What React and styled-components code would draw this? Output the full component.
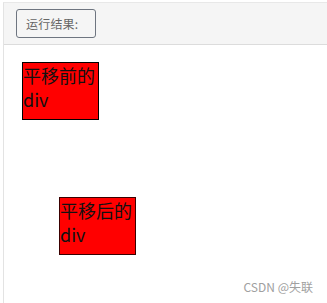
import React from 'react';
import styled, { createGlobalStyle } from 'styled-components';

const GlobalStyle = createGlobalStyle`
  html, body {
    margin: 0;
    padding: 0;
    background: #fff;
    font-family: "Noto Sans CJK SC", "Noto Sans", sans-serif;
  }
`;

const Frame = styled.div`
  position: relative;
  box-sizing: border-box;
  margin: 2px 0 0 3px;
  height: 301px;
  border-left: 1px solid #e3e3e3;
  border-top: 1px solid #e8e8e8;
  display: flex;
  flex-direction: column;
`;

const Toolbar = styled.div`
  box-sizing: border-box;
  height: 42px;
  padding: 6px 0 0 12px;
  background: #f5f5f5;
  border-bottom: 1px solid #dcdcdc;
`;

const ResultButton = styled.div`
  box-sizing: border-box;
  width: 80px;
  height: 29px;
  border: 1px solid #6e7580;
  border-radius: 3px;
  padding-left: 9px;
  display: flex;
  align-items: center;
  font-size: 12px;
  color: #666;
  letter-spacing: 0.2px;
`;

const Output = styled.div`
  flex: 1;
  padding: 17px 0 0 18px;
`;

const Square = styled.div`
  box-sizing: border-box;
  width: 77px;
  height: 58px;
  background: #ff0000;
  border: 1px solid ${({ $edge }) => $edge};
  font-size: 18px;
  line-height: 24px;
  color: #111;
  margin-left: ${({ $left }) => $left}px;
  margin-top: ${({ $top }) => $top}px;
`;

const Watermark = styled.div`
  position: absolute;
  right: 14px;
  bottom: 8px;
  font-size: 12px;
  color: #a0a0a0;
`;

const App = () => (
  <>
    <GlobalStyle />
    <Frame>
      <Toolbar>
        <ResultButton>运行结果:</ResultButton>
      </Toolbar>
      <Output>
        <Square $edge="#000" $left={0} $top={0}>平移前的div</Square>
        <Square $edge="#3a0000" $left={37} $top={77}>平移后的div</Square>
      </Output>
      <Watermark>CSDN @失联</Watermark>
    </Frame>
  </>
);

export default App;
